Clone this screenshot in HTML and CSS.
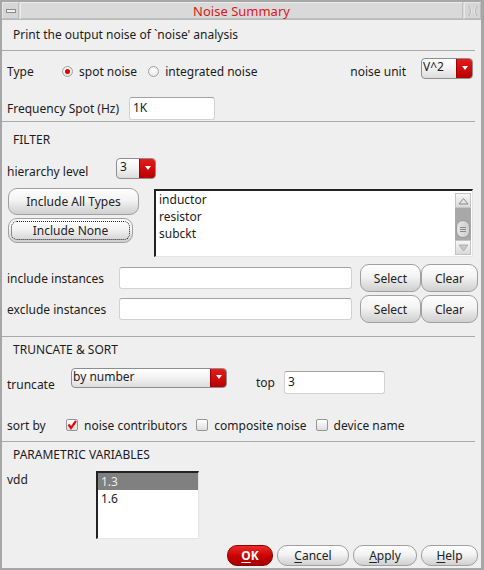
FILE: index.html
```html
<!DOCTYPE html>
<html>
<head>
<meta charset="utf-8">
<link rel="stylesheet" href="styles.css">
</head>
<body>
<div class="window">
  <div class="titlebar">
    <div class="tb-btn"><span class="min-icon"></span></div>
    <div class="tb-title">Noise Summary</div>
    <div class="tb-btn">
      <svg width="14" height="14" viewBox="0 0 14 14"><path d="M3 2 Q7 7 3 12 M11 2 Q7 7 11 12" fill="none" stroke="#bcbcbc" stroke-width="2"/><path d="M4 2.5 Q7.5 7 4 11.5 M10 2.5 Q6.5 7 10 11.5" fill="none" stroke="#f4f4f4" stroke-width="0.8"/></svg>
    </div>
  </div>
  <div class="content">
    <div class="desc">Print the output noise of `noise' analysis</div>
    <div class="sep"></div>
    <div class="s1">
      <div class="row type-row">
        <span class="lbl w-type">Type</span>
        <span class="radio on"></span><span class="opt">spot noise</span>
        <span class="radio"></span><span class="opt">integrated noise</span>
        <span class="lbl unit-lbl">noise unit</span>
        <div class="combo combo-unit"><span class="val">V^2</span><span class="arrow"><i></i></span></div>
      </div>
      <div class="row freq-row">
        <span class="lbl w-freq">Frequency Spot (Hz)</span>
        <div class="input input-freq">1K</div>
      </div>
    </div>
    <div class="sep"></div>
    <div class="s2">
      <div class="heading">FILTER</div>
      <div class="row hier-row">
        <span class="lbl w-hier">hierarchy level</span>
        <div class="combo combo-hier"><span class="val">3</span><span class="arrow"><i></i></span></div>
      </div>
      <div class="filter-main">
        <div class="filter-btns">
          <div class="btn btn-all">Include All Types</div>
          <div class="btn btn-none"><span class="focus">Include None</span></div>
        </div>
        <div class="listbox types">
          <div class="items">
            <div class="item">inductor</div>
            <div class="item">resistor</div>
            <div class="item">subckt</div>
          </div>
          <div class="scroll">
            <div class="sb-btn sb-up"><svg width="11" height="8" viewBox="0 0 11 8"><path d="M1 7 L5.5 1.5 L10 7 Z" fill="none" stroke="#8a8a8a" stroke-width="1"/></svg></div>
            <div class="sb-track"><div class="sb-thumb"><i></i><i></i><i></i></div></div>
            <div class="sb-btn sb-down"><svg width="11" height="8" viewBox="0 0 11 8"><path d="M1 1 L5.5 7 L10 1 Z" fill="#c8c8c8" stroke="#b0b0b0" stroke-width="1"/></svg></div>
          </div>
        </div>
      </div>
      <div class="row inst-row">
        <span class="lbl w-inst">include instances</span>
        <div class="input input-inst"></div>
        <div class="btn btn-sel">Select</div>
        <div class="btn btn-clr">Clear</div>
      </div>
      <div class="row inst-row inst-row2">
        <span class="lbl w-inst">exclude instances</span>
        <div class="input input-inst"></div>
        <div class="btn btn-sel">Select</div>
        <div class="btn btn-clr">Clear</div>
      </div>
    </div>
    <div class="sep"></div>
    <div class="s3">
      <div class="heading">TRUNCATE &amp; SORT</div>
      <div class="row trunc-row">
        <span class="lbl w-trunc">truncate</span>
        <div class="combo combo-trunc"><span class="val">by number</span><span class="arrow"><i></i></span></div>
        <span class="lbl w-top">top</span>
        <div class="input input-top">3</div>
      </div>
      <div class="row sort-row">
        <span class="lbl w-sort">sort by</span>
        <span class="check on"><svg width="10" height="10" viewBox="0 0 10 10"><path d="M1.5 4.5 L4 8 L9 1" fill="none" stroke="#e01010" stroke-width="2.2"/></svg></span><span class="copt">noise contributors</span>
        <span class="check"></span><span class="copt">composite noise</span>
        <span class="check"></span><span class="copt">device name</span>
      </div>
    </div>
    <div class="sep"></div>
    <div class="s4">
      <div class="heading">PARAMETRIC VARIABLES</div>
      <div class="row vdd-row">
        <span class="lbl w-vdd">vdd</span>
        <div class="listbox params">
          <div class="items">
            <div class="item sel">1.3</div>
            <div class="item">1.6</div>
          </div>
        </div>
      </div>
      <div class="footer">
        <div class="btn fbtn ok"><u>O</u>K</div>
        <div class="btn fbtn cancel"><u>C</u>ancel</div>
        <div class="btn fbtn apply"><u>A</u>pply</div>
        <div class="btn fbtn help"><u>H</u>elp</div>
      </div>
    </div>
  </div>
</div>
</body>
</html>
```
FILE: styles.css
```css
* { box-sizing: border-box; }
html, body { margin: 0; padding: 0; }
body {
  width: 484px; height: 570px; overflow: hidden;
  font-family: "Noto Sans", "DejaVu Sans", sans-serif;
  font-size: 12px; color: #1c1c1c; background: #efefef;
}
.window {
  width: 484px; height: 570px;
  border: 2px solid #a6a6a6; border-right-width: 3px;
  background: #efefef;
  display: flex; flex-direction: column;
}
.titlebar {
  height: 18px; flex: none; display: flex;
  background: #d9d9d9; border-bottom: 1px solid #b8b8b8;
}
.tb-btn {
  width: 17px; flex: none; display: flex; align-items: center; justify-content: center;
  background: #d6d6d6; border: 1px solid #e8e8e8; border-right-color: #bdbdbd; border-bottom-color: #bdbdbd;
}
.tb-btn:first-child { margin-right: 1px; }
.tb-btn:last-child { margin-left: 1px; }
.min-icon {
  width: 10px; height: 4px; border: 1px solid #8c8c8c; background: #f2f2f2; margin-top: 1px;
}
.tb-title {
  flex: 1; text-align: center; color: #d81a1a; font-size: 13px; line-height: 17px;
  background: #d9d9d9; border: 1px solid #ececec; border-right-color: #c0c0c0; border-bottom-color: #c0c0c0;
}
.content { flex: 1; display: flex; flex-direction: column; }
.desc { height: 30px; line-height: 30px; padding-left: 11px; flex: none; }
.sep { height: 1px; flex: none; background: #a9a9a9; margin-right: 6px; }
.row { display: flex; align-items: center; padding-left: 5px; flex: none; }
.lbl { flex: none; white-space: nowrap; }
.heading { height: 18px; line-height: 18px; padding-left: 11px; flex: none; }

.s1 { height: 70px; flex: none; padding-top: 9px; }
.type-row { height: 22px; }
.w-type { width: 55px; }
.radio {
  width: 11px; height: 11px; border-radius: 50%; flex: none;
  border: 1px solid #a2a2a2; background: radial-gradient(circle at 50% 35%, #ffffff, #e2e2e2);
  display: flex; align-items: center; justify-content: center;
}
.radio.on::after { content: ""; width: 5px; height: 5px; border-radius: 50%; background: #e00000; }
.opt { margin-left: 6px; margin-right: 11px; white-space: nowrap; }
.unit-lbl { margin-left: auto; margin-right: 15px; }
.combo {
  display: flex; flex: none; border: 1px solid #8e8e8e; border-radius: 4px; overflow: hidden;
  background: linear-gradient(#ffffff, #f2f2f2 50%, #dcdcdc);
}
.combo .val { flex: 1; padding-left: 1px; line-height: 16px; white-space: nowrap; }
.combo .arrow {
  width: 16px; flex: none; display: flex; align-items: center; justify-content: center;
  background: linear-gradient(#e41c1c, #b80000); border-left: 1px solid #a00000;
}
.combo .arrow i {
  display: block; width: 0; height: 0;
  border-left: 3.5px solid transparent; border-right: 3.5px solid transparent; border-top: 4px solid #fff;
  margin-top: -2px;
}
.combo-unit { width: 52px; height: 21px; margin-right: 8px; align-self: flex-start; margin-top: -2px; }
.freq-row { height: 23px; margin-top: 15px; }
.w-freq { width: 122px; }
.input {
  flex: none; background: #fff; border: 1px solid #d2d2d2; border-top-color: #a2a2a2;
  border-radius: 3px; padding-left: 3px; line-height: 20px;
}
.input-freq { width: 86px; height: 23px; }

.s2 { height: 214px; flex: none; padding-top: 9px; }
.hier-row { height: 21px; margin-top: 9px; }
.w-hier { width: 109px; padding-top: 5px; }
.combo-hier { width: 40px; height: 21px; }
.combo-hier .val { padding-left: 3px; }
.filter-main { display: flex; margin-top: 9px; padding-left: 6px; height: 69px; flex: none; }
.filter-btns { width: 146px; flex: none; display: flex; flex-direction: column; }
.btn {
  flex: none; display: flex; align-items: center; justify-content: center; white-space: nowrap;
  border: 1px solid #a0a0a0; border-radius: 9px; color: #222;
  background: linear-gradient(#fefefe, #f3f3f3 45%, #e2e2e2 70%, #d0d0d0);
}
.btn-all { width: 131px; height: 27px; }
.btn-none { width: 125px; height: 25px; margin-top: 3px; padding: 2px; }
.btn-none .focus {
  flex: 1; align-self: stretch; display: flex; align-items: center; justify-content: center;
  border: 1px dotted #222; border-radius: 6px;
}
.listbox {
  background: #fff; display: flex; flex: none;
  border-top: 2px solid #222; border-left: 2px solid #222;
  border-right: 1px solid #e4e4e4; border-bottom: 1px solid #e4e4e4;
}
.listbox .items { flex: 1; }
.item { line-height: 17px; padding-left: 3px; white-space: nowrap; }
.types { width: 319px; height: 68px; margin-top: 1px; }
.scroll { width: 16px; flex: none; display: flex; flex-direction: column; margin: 2px 1px 1px 0; }
.sb-btn {
  height: 15px; flex: none; display: flex; align-items: center; justify-content: center;
  background: linear-gradient(#f6f6f6, #dadada); border: 1px solid #c4c4c4;
}
.sb-track { flex: 1; background: #a8a8a8; display: flex; align-items: flex-end; justify-content: center; padding-bottom: 2px; }
.sb-thumb {
  width: 14px; height: 18px; border-radius: 7px; background: linear-gradient(90deg, #e4e4e4, #cfcfcf);
  border: 1px solid #9a9a9a; display: flex; flex-direction: column; align-items: center; justify-content: center; gap: 1px;
}
.sb-thumb i { display: block; width: 6px; height: 1px; background: #8a8a8a; }

.inst-row { height: 28px; margin-top: 7px; }
.inst-row2 { margin-top: 3px; }
.w-inst { width: 112px; }
.input-inst { width: 233px; height: 22px; margin-right: 8px; }
.btn-sel { width: 61px; height: 28px; }
.btn-clr { width: 57px; height: 28px; }

.s3 { height: 104px; flex: none; padding-top: 4px; }
.trunc-row { height: 23px; margin-top: 12px; }
.w-trunc { width: 64px; padding-top: 3px; }
.combo-trunc { width: 156px; height: 20px; align-self: flex-start; margin-top: -3px; }
.combo-trunc .val { line-height: 15px; }
.w-top { width: 28px; margin-left: 29px; }
.input-top { width: 101px; height: 23px; }
.sort-row { height: 18px; margin-top: 22px; }
.w-sort { width: 59px; }
.check {
  width: 12px; height: 12px; flex: none; border: 1px solid #959595; border-radius: 2px;
  background: linear-gradient(#ffffff, #dedede);
  display: flex; align-items: center; justify-content: center;
}
.copt { margin-left: 6px; margin-right: 9px; white-space: nowrap; }

.s4 { flex: 1; padding-top: 4px; display: flex; flex-direction: column; }
.vdd-row { align-items: flex-start; margin-top: 7px; }
.w-vdd { width: 89px; line-height: 18px; }
.params { width: 103px; height: 68px; }
.params .item { padding-left: 3px; }
.item.sel { background: #808080; color: #ececec; }
.footer { display: flex; justify-content: flex-end; gap: 4px; padding-right: 3px; margin-top: 6px; }
.fbtn { height: 21px; border-radius: 10px; }
.fbtn u { text-underline-offset: 2px; }
.ok {
  width: 46px; color: #fff; font-weight: bold; border-color: #8c0000;
  background: linear-gradient(#ee2a2a, #c80000 55%, #a80000);
}
.cancel { width: 72px; }
.apply { width: 64px; }
.help { width: 57px; }
```
